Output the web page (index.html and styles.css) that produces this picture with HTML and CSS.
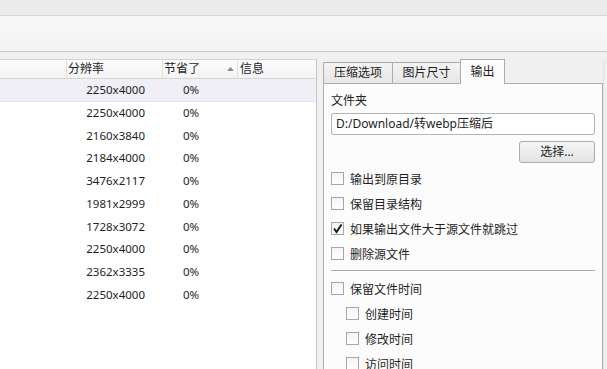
FILE: index.html
```html
<!DOCTYPE html>
<html lang="zh-CN">
<head>
    <meta charset="UTF-8">
    <title>webp 压缩 - 输出</title>
    <link rel="stylesheet" href="styles.css">
</head>
<body>
    <div class="titlebar"></div>
    <div class="toolbar"></div>

    <div class="main">
        <!-- file list -->
        <div class="list">
            <div class="list-head">
                <div class="col c-name"></div>
                <div class="col c-res">分辨率</div>
                <div class="col c-save">节省了
                    <svg class="sort" width="7" height="4" viewBox="0 0 7 4"><path d="M0 4 L3.5 0 L7 4 Z" fill="#8a8a8a"/></svg>
                </div>
                <div class="col c-info">信息</div>
            </div>
            <div class="row selected"><div class="col c-name"></div><div class="col c-res">2250x4000</div><div class="col c-save">0%</div><div class="col c-info"></div></div>
            <div class="row"><div class="col c-name"></div><div class="col c-res">2250x4000</div><div class="col c-save">0%</div><div class="col c-info"></div></div>
            <div class="row"><div class="col c-name"></div><div class="col c-res">2160x3840</div><div class="col c-save">0%</div><div class="col c-info"></div></div>
            <div class="row"><div class="col c-name"></div><div class="col c-res">2184x4000</div><div class="col c-save">0%</div><div class="col c-info"></div></div>
            <div class="row"><div class="col c-name"></div><div class="col c-res">3476x2117</div><div class="col c-save">0%</div><div class="col c-info"></div></div>
            <div class="row"><div class="col c-name"></div><div class="col c-res">1981x2999</div><div class="col c-save">0%</div><div class="col c-info"></div></div>
            <div class="row"><div class="col c-name"></div><div class="col c-res">1728x3072</div><div class="col c-save">0%</div><div class="col c-info"></div></div>
            <div class="row"><div class="col c-name"></div><div class="col c-res">2250x4000</div><div class="col c-save">0%</div><div class="col c-info"></div></div>
            <div class="row"><div class="col c-name"></div><div class="col c-res">2362x3335</div><div class="col c-save">0%</div><div class="col c-info"></div></div>
            <div class="row"><div class="col c-name"></div><div class="col c-res">2250x4000</div><div class="col c-save">0%</div><div class="col c-info"></div></div>
        </div>

        <div class="splitter"></div>

        <!-- options panel -->
        <div class="options">
            <div class="tabs">
                <div class="tab">压缩选项</div>
                <div class="tab">图片尺寸</div>
                <div class="tab active">输出</div>
            </div>
            <div class="tab-body">
                <div class="field-label">文件夹</div>
                <div class="path-input">D:/Download/转webp压缩后</div>
                <div class="btn-row"><div class="btn">选择...</div></div>

                <div class="check"><span class="box"></span>输出到原目录</div>
                <div class="check"><span class="box"></span>保留目录结构</div>
                <div class="check"><span class="box"><svg width="11" height="11" viewBox="0 0 11 11"><path d="M2 5.5 L4.5 9 L9.5 1.5" fill="none" stroke="#1a1a1a" stroke-width="2"/></svg></span>如果输出文件大于源文件就跳过</div>
                <div class="check"><span class="box"></span>删除源文件</div>

                <div class="sep"></div>

                <div class="check"><span class="box"></span>保留文件时间</div>
                <div class="check sub"><span class="box"></span>创建时间</div>
                <div class="check sub"><span class="box"></span>修改时间</div>
                <div class="check sub"><span class="box"></span>访问时间</div>
            </div>
        </div>
        <div class="edge"></div>
    </div>
</body>
</html>
```

FILE: styles.css
```css
body {
    margin: 0;
    width: 607px;
    height: 369px;
    overflow: hidden;
    background: #f0f0f0;
    color: #1e1e1e;
    font-family: 'Noto Sans', 'Noto Sans CJK SC', sans-serif;
    font-size: 12px;
    display: flex;
    flex-direction: column;
}

.titlebar {
    height: 15px;
    flex: none;
    background: #ebebeb;
    border-bottom: 1px solid #d6d6d6;
}

.toolbar {
    height: 35px;
    flex: none;
    background: linear-gradient(#f8f8f8, #f3f3f3);
    border-bottom: 1px solid #c9c9c9;
}

.main {
    flex: 1;
    display: flex;
    padding-top: 7px;
    min-height: 0;
}

/* list view */
.list {
    width: 316px;
    flex: none;
    background: #fff;
    border-right: 1px solid #c4c4c4;
    border-top: 1px solid #d2d2d2;
}

.list-head {
    display: flex;
    height: 18px;
    background: linear-gradient(#fdfdfd, #f4f4f4);
    border-bottom: 1px solid #d5d5d5;
}

.list-head .col {
    border-right: 1px solid #e0e0e0;
    line-height: 18px;
    padding-left: 1px;
    box-sizing: border-box;
}

.col {
    height: 100%;
}

.c-name { width: 67px; }
.c-res { width: 96px; }
.c-save { width: 75px; position: relative; }
.c-info { flex: 1; }

.list-head .c-res { padding-left: 1px; }
.list-head .c-info { border-right: none; padding-left: 2px; }

.sort {
    position: absolute;
    left: 64px;
    top: 7px;
}

.row {
    display: flex;
    height: 22.75px;
    line-height: 22.75px;
    font-size: 11.5px;
}

.row.selected {
    background: #f1eff6;
    box-shadow: inset 0 -1px 0 #e6e3ee;
}

.row .c-res {
    text-align: right;
    padding-right: 18px;
    box-sizing: border-box;
}

.row .c-save {
    padding-left: 20px;
    box-sizing: border-box;
}

.splitter {
    width: 6px;
    flex: none;
}

/* tab panel */
.options {
    width: 280px;
    flex: none;
    display: flex;
    flex-direction: column;
}

.tabs {
    display: flex;
    height: 24px;
    flex: none;
    align-items: flex-end;
    position: relative;
    z-index: 1;
}

.tab {
    height: 20px;
    line-height: 20px;
    text-align: center;
    background: linear-gradient(#f3f3f3, #e6e6e6);
    border: 1px solid #acacac;
    border-bottom: none;
    box-sizing: content-box;
    margin-right: -1px;
}

.tab:nth-child(1) { width: 68px; }
.tab:nth-child(2) { width: 67px; }

.tab.active {
    width: 43px;
    height: 24px;
    line-height: 24px;
    background: #fcfcfc;
    margin-bottom: -1px;
}

.tab-body {
    flex: 1;
    background: #fcfcfc;
    border: 1px solid #acacac;
    padding: 9px 7px 0 7px;
    display: flex;
    flex-direction: column;
}

.field-label {
    line-height: 16px;
}

.path-input {
    margin-top: 4px;
    height: 20px;
    line-height: 20px;
    border: 1px solid #b4b4b4;
    border-radius: 2px;
    background: #fff;
    padding-left: 4px;
}

.btn-row {
    display: flex;
    justify-content: flex-end;
    margin-top: 6px;
}

.btn {
    width: 74px;
    height: 20px;
    line-height: 20px;
    text-align: center;
    border: 1px solid #adadad;
    border-radius: 3px;
    background: linear-gradient(#f6f6f6, #e2e2e2);
}

.check {
    display: flex;
    align-items: center;
    height: 25px;
    flex: none;
}

.btn-row + .check { margin-top: 3px; }

.check.sub { padding-left: 15px; }

.box {
    width: 11px;
    height: 11px;
    margin-right: 6px;
    border: 1px solid #a6a6a6;
    background: linear-gradient(#f4f4f4, #ffffff);
    display: flex;
    align-items: center;
    justify-content: center;
}

.sep {
    height: 1px;
    margin: 4px 0 5px;
    background: #a9a9a9;
    box-shadow: 0 1px 0 #fff;
    flex: none;
}

.edge {
    width: 5px;
    flex: none;
    border-left: 1px solid #e2e2e2;
}
```
